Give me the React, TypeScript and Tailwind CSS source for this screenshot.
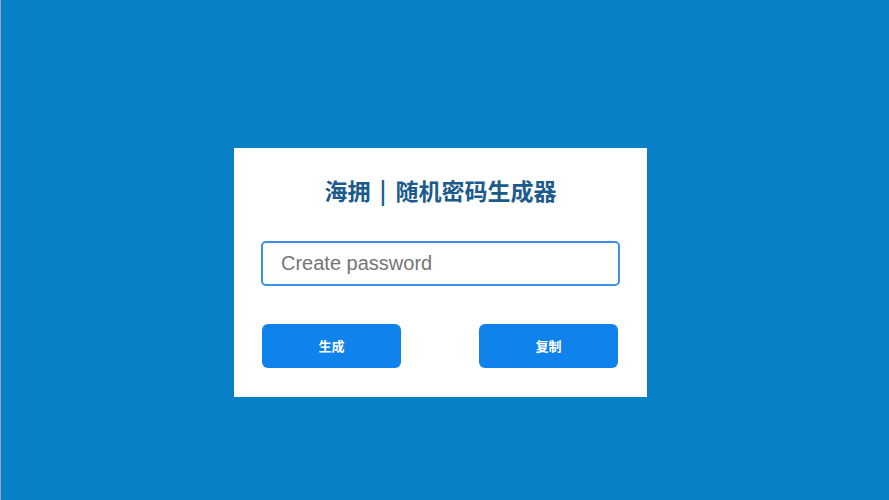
import { useState } from "react";

export default function App() {
  const [password, setPassword] = useState("");

  return (
    <div className="h-[500px] w-full bg-[#0780c8] border-l border-[#8fa4b4] pl-[233px] pt-[148px] font-['Liberation_Sans','Noto_Sans_CJK_SC',sans-serif]">
      <div className="w-[413px] bg-white px-[27px] pt-[27px] pb-[29px]">
        <h1 className="flex h-[30px] items-center justify-center text-[23px] leading-[30px] font-bold text-[#1b5a8d] font-['Noto_Sans_CJK_SC',sans-serif]">
          <span>海拥</span>
          <span className="mx-[9px]">|</span>
          <span>随机密码生成器</span>
        </h1>

        <div className="mt-[36px] h-[45px] w-[359px] rounded-[5px] border-2 border-[#3b91e8]">
          <input
            type="text"
            value={password}
            onChange={(e) => setPassword(e.target.value)}
            placeholder="Create password"
            className="block h-full w-full bg-transparent pl-[18px] text-[20px] text-[#333] placeholder:text-[#757575] outline-none"
          />
        </div>

        <div className="mt-[38px] flex justify-between pl-px pr-[2px]">
          <button
            type="button"
            className="h-[44px] w-[139px] rounded-[6px] bg-[#0f82ec] text-[13px] font-bold text-white font-['Noto_Sans_CJK_SC',sans-serif]"
          >
            生成
          </button>
          <button
            type="button"
            className="h-[44px] w-[139px] rounded-[6px] bg-[#0f82ec] text-[13px] font-bold text-white font-['Noto_Sans_CJK_SC',sans-serif]"
          >
            复制
          </button>
        </div>
      </div>
    </div>
  );
}
